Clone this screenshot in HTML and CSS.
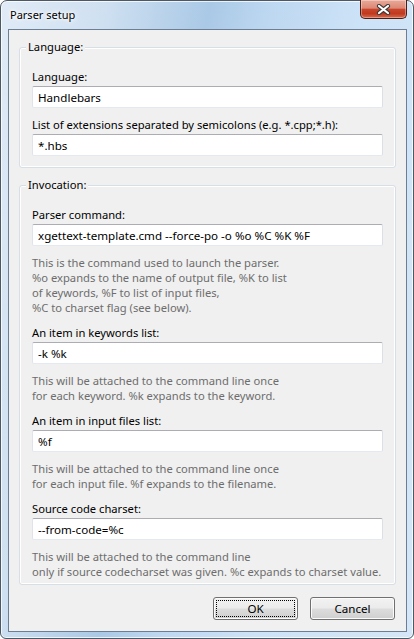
FILE: index.html
```html
<!DOCTYPE html>
<html>
<head>
<meta charset="utf-8">
<title>Parser setup</title>
<link rel="stylesheet" href="styles.css">
</head>
<body>
<div class="window">
  <div class="titlebar">
    <span class="title">Parser setup</span>
    <button class="close" aria-label="Close">
      <svg width="15" height="11" viewBox="0 0 15 11">
        <path d="M3 2 L12 9 M12 2 L3 9" stroke="#3a3a3a" stroke-width="4.2" stroke-linecap="round" fill="none"/>
        <path d="M3 2 L12 9 M12 2 L3 9" stroke="#ffffff" stroke-width="2.2" stroke-linecap="round" fill="none"/>
      </svg>
    </button>
  </div>
  <div class="client">
    <section class="group">
      <div class="group-title">Language:</div>
      <div class="field">
        <label class="lbl">Language:</label>
        <input class="txt" type="text" value="Handlebars" readonly>
      </div>
      <div class="field">
        <label class="lbl">List of extensions separated by semicolons (e.g. *.cpp;*.h):</label>
        <input class="txt" type="text" value="*.hbs" readonly>
      </div>
    </section>
    <section class="group invocation">
      <div class="group-title">Invocation:</div>
      <div class="field">
        <label class="lbl">Parser command:</label>
        <input class="txt" type="text" value="xgettext-template.cmd --force-po -o %o %C %K %F" readonly>
        <p class="help">This is the command used to launch the parser.<br>%o expands to the name of output file, %K to list<br>of keywords, %F to list of input files,<br>%C to charset flag (see below).</p>
      </div>
      <div class="field">
        <label class="lbl">An item in keywords list:</label>
        <input class="txt" type="text" value="-k %k" readonly>
        <p class="help">This will be attached to the command line once<br>for each keyword. %k expands to the keyword.</p>
      </div>
      <div class="field">
        <label class="lbl">An item in input files list:</label>
        <input class="txt" type="text" value="%f" readonly>
        <p class="help">This will be attached to the command line once<br>for each input file. %f expands to the filename.</p>
      </div>
      <div class="field">
        <label class="lbl">Source code charset:</label>
        <input class="txt" type="text" value="--from-code=%c" readonly>
        <p class="help">This will be attached to the command line<br>only if source codecharset was given. %c expands to charset value.</p>
      </div>
    </section>
    <div class="buttons">
      <button class="btn default">OK</button>
      <button class="btn">Cancel</button>
    </div>
  </div>
</div>
</body>
</html>
```
FILE: styles.css
```css
html, body {
  margin: 0;
  padding: 0;
  background: #ffffff;
}

body {
  font-family: "Noto Sans", "Open Sans", sans-serif;
  font-size: 11.2px;
  color: #000;
}

.window {
  width: 414px;
  height: 639px;
  box-sizing: border-box;
  border: 1px solid #4c5866;
  border-radius: 7px 7px 6px 6px;
  padding: 0 6px 6px 7px;
  display: flex;
  flex-direction: column;
  background:
    linear-gradient(100deg, #e0ebf6 0%, #cfe0f1 20%, #aac9e6 40%, #bed8f1 52%, #cde3f7 70%, #d4e6f7 100%);
  box-shadow: inset 0 0 0 1px rgba(255, 255, 255, 0.75);
}

.titlebar {
  height: 28px;
  flex: none;
  display: flex;
  align-items: flex-start;
  margin: 0 -6px 0 -7px;
  padding-left: 9px;
}

.title {
  margin-top: 6px;
  line-height: 16px;
  font-size: 11px;
  color: #000;
  text-shadow: 0 0 5px #ffffff, 0 0 3px #ffffff, 0 0 8px rgba(255, 255, 255, 0.8);
}

.close {
  margin-left: auto;
  margin-right: 6px;
  margin-top: -1px;
  width: 47px;
  height: 19px;
  padding: 0;
  border: 1px solid #4a1d16;
  border-top: none;
  border-radius: 0 0 5px 5px;
  background: linear-gradient(#eaa999 0%, #dc8975 45%, #c8452c 52%, #c13a20 75%, #d5694c 100%);
  box-shadow: inset 0 0 0 1px rgba(255, 255, 255, 0.35);
  display: flex;
  align-items: center;
  justify-content: center;
}

.close svg {
  display: block;
  margin-top: 1px;
}

.client {
  flex: 1;
  border: 1px solid #6c7e93;
  background: #f0f0f0;
  display: flex;
  flex-direction: column;
  padding: 0 10px;
}

.group {
  position: relative;
  margin-top: 17px;
  border: 1px solid #d5dfe5;
  border-radius: 3px;
  box-shadow: inset 0 0 0 1px #ffffff;
  padding: 21px 12px 11px;
  display: flex;
  flex-direction: column;
  gap: 9px;
}

.group.invocation {
  gap: 10px;
  padding-bottom: 5px;
}

.group-title {
  position: absolute;
  top: -9px;
  left: 6px;
  padding: 0 2px;
  line-height: 16px;
  background: #f0f0f0;
  color: #000;
}

.field {
  display: flex;
  flex-direction: column;
}

.lbl {
  display: block;
  line-height: 15px;
  margin-bottom: 2px;
  white-space: nowrap;
}

.txt {
  display: block;
  width: 351px;
  height: 22px;
  box-sizing: border-box;
  margin: 0;
  border: 1px solid;
  border-color: #abadb3 #dbdfe6 #e3e9ef #e2e3ea;
  border-radius: 2px;
  padding: 0 5px;
  background: #ffffff;
  font-family: inherit;
  font-size: 11.6px;
  color: #000;
  outline: none;
}

.help {
  margin: 9px 0 0;
  line-height: 15px;
  color: #6d6d6d;
  white-space: nowrap;
}

.buttons {
  display: flex;
  justify-content: flex-end;
  gap: 12px;
  margin-top: 12px;
  margin-right: 1px;
}

.btn {
  width: 85px;
  height: 23px;
  padding: 0;
  border: 1px solid #707070;
  border-radius: 3px;
  background: linear-gradient(#f2f2f2 0%, #ebebeb 48%, #dddddd 52%, #cfcfcf 100%);
  box-shadow: inset 0 0 0 1px #fbfbfb;
  font-family: inherit;
  font-size: 11.6px;
  color: #000;
}

.btn.default {
  outline: 1px dotted #000;
  outline-offset: -4px;
}
```
